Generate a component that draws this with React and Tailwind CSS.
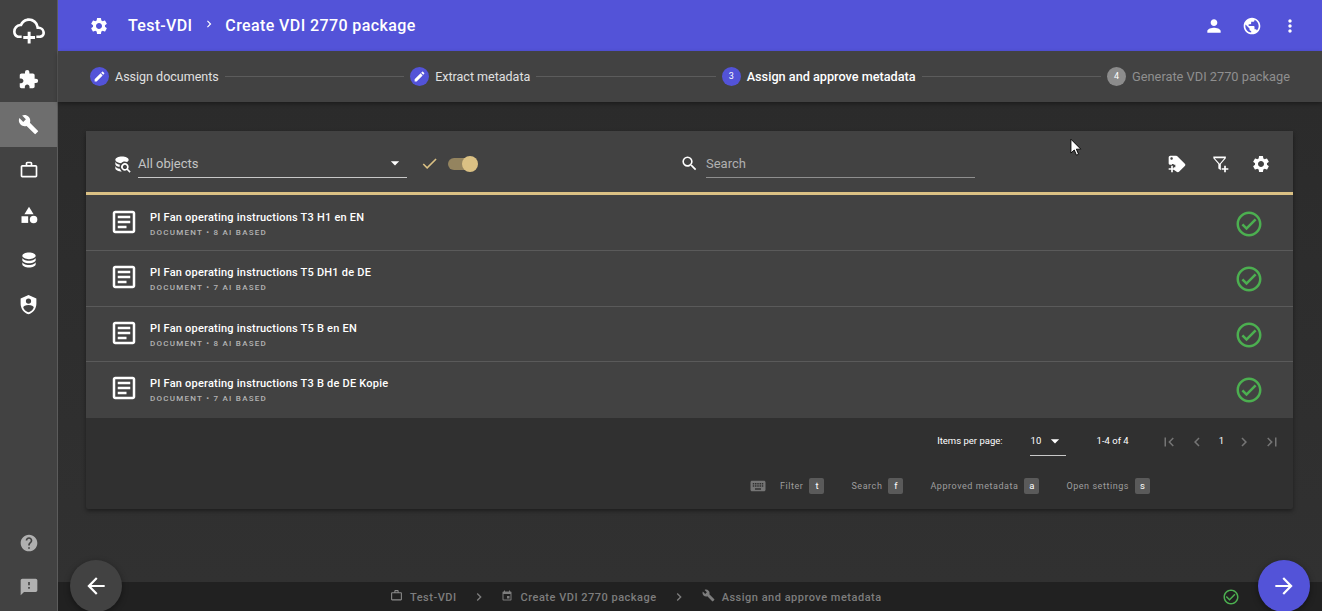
import {
  MdSettings, MdPerson, MdPublic, MdMoreVert, MdExtension, MdBuild, MdWorkOutline, MdCategory,
  MdEdit, MdArrowDropDown, MdCheck, MdSearch, MdKeyboard, MdFirstPage, MdLastPage, MdChevronLeft, MdChevronRight,
  MdHelp, MdFeedback, MdArrowBack, MdArrowForward, MdOutlineArticle, MdCheckCircleOutline, MdOutlineCheckCircle, MdEvent,
} from 'react-icons/md';

function CloudPlus() {
  return (
    <svg viewBox="0 0 24 24" className="w-[32px] h-[32px]" fill="white">
      <path d="M19.35 10.04A7.49 7.49 0 0 0 12 4C9.11 4 6.6 5.64 5.35 8.04A5.994 5.994 0 0 0 0 14c0 2.5 1.6 4.2 3.4 4.8h3.1v-2H4.2C2.8 16.3 2 15.4 2 14c0-2.05 1.53-3.76 3.56-3.97l1.07-.11.5-.95A5.47 5.47 0 0 1 12 6c2.62 0 4.88 1.86 5.39 4.43l.3 1.5 1.53.11A2.98 2.98 0 0 1 22 15c0 .8-.6 1.5-2 1.8h-2.5v2h3.2c2-.4 3.3-2 3.3-3.8 0-2.64-2.05-4.78-4.65-4.96z" />
      <path d="M11 14h2.2v3.3h3.3v2.2h-3.3v3.3H11v-3.3H7.7v-2.2H11z" />
    </svg>
  );
}

function DatabaseIcon() {
  return (
    <svg viewBox="0 0 24 24" className="w-[20px] h-[20px]" fill="white">
      <path d="M12 3C7.58 3 4 4.79 4 7s3.58 4 8 4 8-1.79 8-4-3.58-4-8-4M4 9v3c0 2.21 3.58 4 8 4s8-1.79 8-4V9c0 2.21-3.58 4-8 4s-8-1.79-8-4m0 5v3c0 2.21 3.58 4 8 4s8-1.79 8-4v-3c0 2.21-3.58 4-8 4s-8-1.79-8-4" />
    </svg>
  );
}

function ShieldAccount() {
  return (
    <svg viewBox="0 0 24 24" className="w-[21px] h-[21px]" fill="white">
      <path d="M12,1L3,5V11C3,16.55 6.84,21.74 12,23C17.16,21.74 21,16.55 21,11V5L12,1M12,5A3,3 0 0,1 15,8A3,3 0 0,1 12,11A3,3 0 0,1 9,8A3,3 0 0,1 12,5M17.13,17C15.92,18.85 14.11,20.24 12,20.92C9.89,20.24 8.08,18.85 6.87,17C6.53,16.5 6.24,16 6,15.47C6,13.82 8.71,12.47 12,12.47C15.29,12.47 18,13.79 18,15.47C17.76,16 17.47,16.5 17.13,17Z" />
    </svg>
  );
}

function DatabaseSearch() {
  return (
    <svg viewBox="0 0 24 24" className="w-[20px] h-[20px]" fill="white">
      <path d="M18.68 12.32a4.49 4.49 0 0 0-6.36.01 4.49 4.49 0 0 0 0 6.36 4.51 4.51 0 0 0 5.57.63L21 22.39 22.39 21l-3.09-3.11c1.13-1.77.87-4.09-.62-5.57m-1.41 4.95c-.98.98-2.56.97-3.54 0-.97-.98-.97-2.56.01-3.54.97-.97 2.55-.97 3.53 0 .97.98.97 2.56 0 3.54M10.9 20.1a6.5 6.5 0 0 1-1.48-2.32C6.27 17.25 4 15.76 4 14v3c0 2.21 3.58 4 8 4-.4-.27-.77-.55-1.1-.9M4 9v3c0 1.68 2.07 3.12 5 3.7v-.2c0-.93.2-1.85.58-2.69C6.34 12.3 4 10.79 4 9m8-6C7.58 3 4 4.79 4 7c0 2 3 3.68 6.85 4h.05c1.09-1.25 2.66-2 4.35-2 1 0 1.96.26 2.8.74C19.3 9 20 8.05 20 7c0-2.21-3.58-4-8-4" />
    </svg>
  );
}

function TagPlus() {
  return (
    <svg viewBox="0 0 24 24" className="w-[20px] h-[20px]" fill="white">
      <path d="M21.41 11.58l-9-9C12.05 2.22 11.55 2 11 2H4c-1.1 0-2 .9-2 2v7c0 .55.22 1.05.59 1.42l.41.4V13h3v-1h2v1h2v3H8v2.8l3.59 2.61c.36.37.86.59 1.41.59s1.05-.22 1.41-.59l7-7c.37-.36.59-.86.59-1.41s-.22-1.05-.59-1.42M5.5 7C4.67 7 4 6.33 4 5.5S4.67 4 5.5 4 7 4.67 7 5.5 6.33 7 5.5 7" />
      <path d="M5 14h2v3h3v2H7v3H5v-3H2v-2h3z" />
    </svg>
  );
}

function FilterPlus() {
  return (
    <svg viewBox="0 0 24 24" className="w-[20px] h-[20px]" fill="white">
      <path d="M2 3h17v2.2L13 12v7.5l-3-2V12L4 5.2V3zm3.6 2l6 6.6L17.2 5H5.6z" fillRule="evenodd" />
      <path d="M17 14h2v3h3v2h-3v3h-2v-3h-3v-2h3z" />
    </svg>
  );
}

function Cursor() {
  return (
    <svg viewBox="0 0 13 20" className="absolute left-[1070px] top-[138px] w-[12px] h-[19px]">
      <path d="M1 1v15l3.6-3.3 2.4 5.6 2.3-1-2.4-5.5h4.8z" fill="white" stroke="black" strokeWidth="1" />
    </svg>
  );
}

function NavItem({ active, children }) {
  return (
    <div className={`h-[45px] flex items-center justify-center ${active ? 'bg-[#6e6e6e]' : ''}`}>
      {children}
    </div>
  );
}

function Step({ badge, label, labelClass, line }) {
  return (
    <>
      <div className="flex items-center shrink-0">
        <span className={`w-[19px] h-[19px] rounded-full flex items-center justify-center text-white text-[9px] ${badge.bg}`}>{badge.content}</span>
        <span className={`ml-[6px] mt-[1px] ${labelClass}`}>{label}</span>
      </div>
      {line && <div className="flex-1 h-px bg-[#5c5c5c] mx-[6px]" />}
    </>
  );
}

function DocRow({ title, meta, last }) {
  return (
    <div className={`h-[55.25px] flex items-center pl-[23px] pr-[29px] ${last ? '' : 'border-b border-[#5a5a5a]'}`}>
      <MdOutlineArticle className="text-white w-[30px] h-[30px] mb-[2px]" />
      <div className="ml-[11px] flex-1 mt-[3px]">
        <div className="text-[11px] font-medium text-white leading-[14px] tracking-[0.22px]">{title}</div>
        <div className="text-[8px] font-medium tracking-[1.25px] text-[#b4b4b4] leading-[10px] mt-[3px]">{meta}</div>
      </div>
      <MdOutlineCheckCircle className="text-[#4caf50] w-[30px] h-[30px] mt-[2px]" />
    </div>
  );
}

function Shortcut({ label, k }) {
  return (
    <div className="flex items-center">
      <span className="text-[9px] mt-[1px] text-[#9e9e9e] tracking-[0.55px]">{label}</span>
      <span className="ml-[6px] min-w-[15px] h-[16px] px-[4px] rounded-[2px] bg-[#5a5a5a] text-white text-[9.5px] flex items-center justify-center">{k}</span>
    </div>
  );
}

const docs = [
  ['PI Fan operating instructions T3 H1 en EN', 'DOCUMENT • 8 AI BASED'],
  ['PI Fan operating instructions T5 DH1 de DE', 'DOCUMENT • 7 AI BASED'],
  ['PI Fan operating instructions T5 B en EN', 'DOCUMENT • 8 AI BASED'],
  ['PI Fan operating instructions T3 B de DE Kopie', 'DOCUMENT • 7 AI BASED'],
];

export default function App() {
  return (
    <div className="relative w-[1322px] h-[611px] overflow-hidden flex bg-[#303030] font-['Roboto',sans-serif]">
      {/* Sidebar */}
      <aside className="w-[58px] shrink-0 bg-[#424242] border-r border-[#5c5c5c] flex flex-col">
        <div className="h-[57px] flex items-center justify-center"><CloudPlus /></div>
        <NavItem><MdExtension className="text-white w-[21px] h-[21px]" /></NavItem>
        <NavItem active><MdBuild className="text-white w-[21px] h-[21px]" /></NavItem>
        <NavItem><MdWorkOutline className="text-white w-[20px] h-[20px]" /></NavItem>
        <NavItem><MdCategory className="text-white w-[20px] h-[20px]" /></NavItem>
        <NavItem><DatabaseIcon /></NavItem>
        <NavItem><ShieldAccount /></NavItem>
        <div className="flex-1" />
        <div className="h-[44px] flex items-center justify-center"><MdHelp className="text-[#b0b0b0] w-[20px] h-[20px]" /></div>
        <div className="h-[46px] pb-[3px] flex items-center justify-center"><MdFeedback className="text-[#b0b0b0] w-[20px] h-[20px]" /></div>
      </aside>

      <div className="flex-1 min-w-0 flex flex-col">
        {/* Header */}
        <header className="h-[51px] shrink-0 bg-[#5353d8] flex items-center pl-[31px] pr-[22px] text-white">
          <MdSettings className="w-[20px] h-[20px]" />
          <span className="ml-[19px] text-[16px] font-medium tracking-[0.3px] mt-[1px]">Test-VDI</span>
          <MdChevronRight className="ml-[10px] mb-[4px] w-[14px] h-[14px]" />
          <span className="ml-[9px] text-[16px] font-medium tracking-[0.4px] mt-[1px]">Create VDI 2770 package</span>
          <div className="flex-1" />
          <MdPerson className="w-[20px] h-[20px]" />
          <MdPublic className="ml-[18px] w-[20px] h-[20px]" />
          <MdMoreVert className="ml-[18px] w-[20px] h-[20px]" />
        </header>

        {/* Stepper */}
        <div className="h-[51px] shrink-0 bg-[#424242] flex items-center pl-[32px] pr-[32px] shadow-[0_2px_4px_rgba(0,0,0,0.35)] z-10">
          <Step badge={{ bg: 'bg-[#5353d8]', content: <MdEdit className="w-[13px] h-[13px]" /> }} label="Assign documents" labelClass="text-[12.5px] text-[#e0e0e0]" line />
          <Step badge={{ bg: 'bg-[#5353d8]', content: <MdEdit className="w-[13px] h-[13px]" /> }} label="Extract metadata" labelClass="text-[12.5px] text-[#e0e0e0]" line />
          <Step badge={{ bg: 'bg-[#5353d8]', content: '3' }} label="Assign and approve metadata" labelClass="text-[12.7px] text-white font-medium" line />
          <Step badge={{ bg: 'bg-[#8c8c8c]', content: '4' }} label="Generate VDI 2770 package" labelClass="text-[12.8px] text-[#8f8f8f]" />
        </div>

        {/* Content */}
        <main className="flex-1 min-h-0 pt-[29px] pl-[28px] pr-[29px] bg-gradient-to-b from-[#2b2b2b] to-[#313131]">
          <section className="h-[378px] bg-[#303030] rounded-[2px] shadow-[0_2px_4px_rgba(0,0,0,0.4)] flex flex-col">
            <div className="h-[61px] bg-[#424242] flex items-center pt-[4px] pl-[26px] pr-[22px]">
              <DatabaseSearch />
              <div className="ml-[6px] w-[269px] h-[28px] border-b border-[#c8c8c8] flex items-center justify-between pr-[2px]">
                <span className="text-[13px] mt-[1px] text-[#c4c4c4]">All objects</span>
                <MdArrowDropDown className="text-white w-[20px] h-[20px]" />
              </div>
              <MdCheck className="ml-[13px] text-[#dbc184] w-[19px] h-[19px]" />
              <div className="ml-[9px] relative w-[30px] h-[16px] flex items-center">
                <div className="w-[28px] h-[12px] rounded-full bg-[#94845f]" />
                <div className="absolute right-0 w-[16px] h-[16px] rounded-full bg-[#dbc184]" />
              </div>
              <MdSearch className="ml-[202px] text-white w-[19px] h-[19px]" />
              <div className="ml-[7px] w-[269px] h-[28px] border-b border-[#8f8f8f] flex items-center">
                <span className="text-[13px] mt-[1px] text-[#b0b0b0]">Search</span>
              </div>
              <div className="flex-1" />
              <TagPlus />
              <span className="ml-[23px]"><FilterPlus /></span>
              <MdSettings className="ml-[21px] text-white w-[20px] h-[20px]" />
            </div>
            <div className="h-[3px] bg-[#dbc184]" />
            <div className="bg-[#424242] h-[223px] pt-[1px]">
              {docs.map(([title, meta], i) => (
                <DocRow key={title} title={title} meta={meta} last={i === docs.length - 1} />
              ))}
            </div>

            {/* Pagination */}
            <div className="h-[47px] flex items-center justify-end pr-[12px] text-white">
              <span className="text-[9.5px]">Items per page:</span>
              <div className="ml-[27px] w-[36px] h-[28px] border-b border-[#c8c8c8] flex items-center justify-between pl-[1px]">
                <span className="text-[9.5px]">10</span>
                <MdArrowDropDown className="w-[20px] h-[20px] mr-[1px]" />
              </div>
              <span className="ml-[31px] text-[9.5px]">1-4 of 4</span>
              <MdFirstPage className="ml-[31px] text-[#757575] w-[18px] h-[18px]" />
              <MdChevronLeft className="ml-[10px] text-[#757575] w-[18px] h-[18px]" />
              <span className="ml-[13px] text-[9.5px]">1</span>
              <MdChevronRight className="ml-[11px] text-[#757575] w-[18px] h-[18px]" />
              <MdLastPage className="ml-[10px] text-[#757575] w-[18px] h-[18px]" />
            </div>

            {/* Keyboard shortcuts */}
            <div className="flex items-center justify-end gap-[27px] pr-[143px] pt-[12px]">
              <div className="flex items-center gap-[13px]">
                <MdKeyboard className="text-[#757575] w-[18px] h-[18px]" />
                <Shortcut label="Filter" k="t" />
              </div>
              <Shortcut label="Search" k="f" />
              <Shortcut label="Approved metadata" k="a" />
              <Shortcut label="Open settings" k="s" />
            </div>
          </section>
        </main>

        {/* Bottom bar */}
        <footer className="h-[29px] shrink-0 bg-[#212121] flex items-center text-[#7d7d7d] text-[11px] font-medium tracking-[0.5px]">
          <div className="ml-[332px] flex items-center">
            <MdWorkOutline className="w-[13px] h-[13px] text-[#8a8a8a] mb-[2px]" />
            <span className="ml-[7px] mt-[3px]">Test-VDI</span>
            <MdChevronRight className="ml-[14px] w-[16px] h-[16px] mt-[1px]" />
            <MdEvent className="ml-[14px] w-[12px] h-[12px] mb-[2px]" />
            <span className="ml-[8px] mt-[3px]">Create VDI 2770 package</span>
            <MdChevronRight className="ml-[14px] w-[16px] h-[16px] mt-[1px]" />
            <MdBuild className="ml-[15px] w-[13px] h-[13px] mb-[3px]" />
            <span className="ml-[7px] mt-[3px]">Assign and approve metadata</span>
          </div>
          <div className="flex-1" />
          <MdCheckCircleOutline className="mr-[82px] text-[#4caf50] w-[18px] h-[18px]" />
        </footer>
      </div>

      {/* Floating buttons */}
      <button className="absolute left-[70px] top-[560px] w-[52px] h-[52px] rounded-full bg-[#424242] shadow-[0_2px_6px_rgba(0,0,0,0.4)] flex items-center justify-center">
        <MdArrowBack className="text-white w-[26px] h-[26px]" />
      </button>
      <button className="absolute left-[1258px] top-[560px] w-[52px] h-[52px] rounded-full bg-[#5353d8] shadow-[0_2px_6px_rgba(0,0,0,0.4)] flex items-center justify-center">
        <MdArrowForward className="text-white w-[26px] h-[26px]" />
      </button>
      <Cursor />
    </div>
  );
}
